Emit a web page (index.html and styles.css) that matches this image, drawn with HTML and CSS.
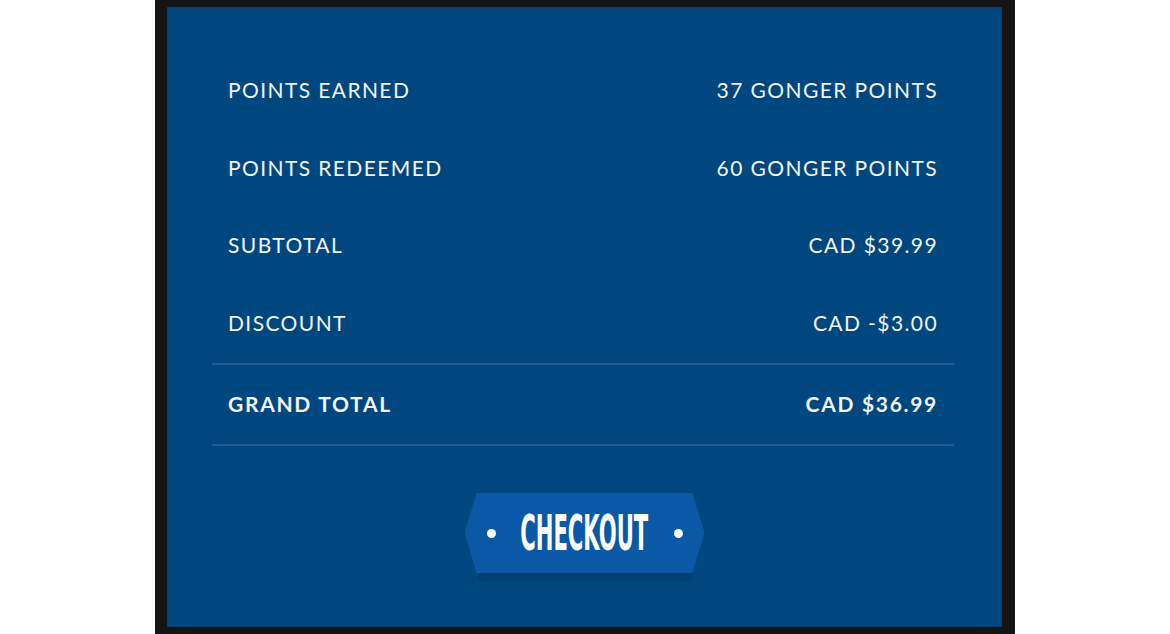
FILE: index.html
```html
<!DOCTYPE html>
<html lang="en">
<head>
    <meta charset="UTF-8">
    <meta name="viewport" content="width=device-width, initial-scale=1.0">
    <title>Order Summary</title>
    <link rel="stylesheet" href="styles.css">
</head>
<body>
    <div class="frame">
        <div class="panel">
            <div class="summary">
                <div class="row">
                    <span>POINTS EARNED</span>
                    <span>37 GONGER POINTS</span>
                </div>
                <div class="row">
                    <span>POINTS REDEEMED</span>
                    <span>60 GONGER POINTS</span>
                </div>
                <div class="row">
                    <span>SUBTOTAL</span>
                    <span>CAD $39.99</span>
                </div>
                <div class="row">
                    <span>DISCOUNT</span>
                    <span>CAD -$3.00</span>
                </div>
                <div class="row total">
                    <span>GRAND TOTAL</span>
                    <span>CAD $36.99</span>
                </div>
            </div>
            <div class="checkout-wrap">
                <button class="checkout">
                    <span class="dot"></span>
                    <span class="label">CHECKOUT</span>
                    <span class="dot"></span>
                </button>
            </div>
        </div>
    </div>
</body>
</html>
```

FILE: styles.css
```css
body {
    margin: 0;
    padding: 0;
    background-color: #fff;
    font-family: Lato, "Noto Sans", sans-serif;
    display: flex;
    justify-content: center;
}

.frame {
    width: 860px;
    height: 634px;
    box-sizing: border-box;
    background-color: #141414;
    padding: 7px 13px 7px 12px;
}

.panel {
    height: 100%;
    background-color: #00467f;
    box-shadow: inset 0 0 0 1px #0d3a66;
    padding-top: 44px;
    box-sizing: border-box;
}

.summary {
    margin: 0 48px 0 45px;
}

.row {
    display: flex;
    justify-content: space-between;
    align-items: center;
    height: 77.5px;
    padding: 0 16px;
    color: #f2f5f9;
    font-size: 21px;
    letter-spacing: 1.4px;
}

.row.total {
    height: 76px;
    padding-bottom: 3px;
    font-weight: bold;
    letter-spacing: 1.7px;
    border-top: 2px solid #1f5a92;
    border-bottom: 2px solid #1f5a92;
    margin-top: 2px;
}

.checkout-wrap {
    display: flex;
    justify-content: center;
    padding-top: 47px;
}

.checkout {
    position: relative;
    width: 240px;
    height: 80px;
    border: none;
    padding: 0 22px;
    background: none;
    display: flex;
    align-items: center;
    justify-content: space-between;
    cursor: pointer;
}

/* hexagon face plus the darker strip under it */
.checkout::before,
.checkout::after {
    content: "";
    position: absolute;
    left: 0;
    top: 0;
    width: 100%;
    height: 100%;
    clip-path: polygon(12px 0, 228px 0, 240px 50%, 228px 100%, 12px 100%, 0 50%);
}

.checkout::before {
    background-color: #004071;
    top: 8px;
    clip-path: polygon(13px 0, 227px 0, 227px 100%, 13px 100%);
}

.checkout::after {
    background-color: #0b59a6;
}

.dot,
.label {
    position: relative;
    z-index: 1;
}

.dot {
    width: 9px;
    height: 9px;
    border-radius: 50%;
    background-color: #fff;
}

.label {
    color: #fff;
    font-family: "DejaVu Sans Condensed", "DejaVu Sans", sans-serif;
    font-weight: bold;
    font-size: 50px;
    line-height: 1;
    display: inline-block;
    transform: scaleX(0.47);
    margin: 0 -80px;
}
```
